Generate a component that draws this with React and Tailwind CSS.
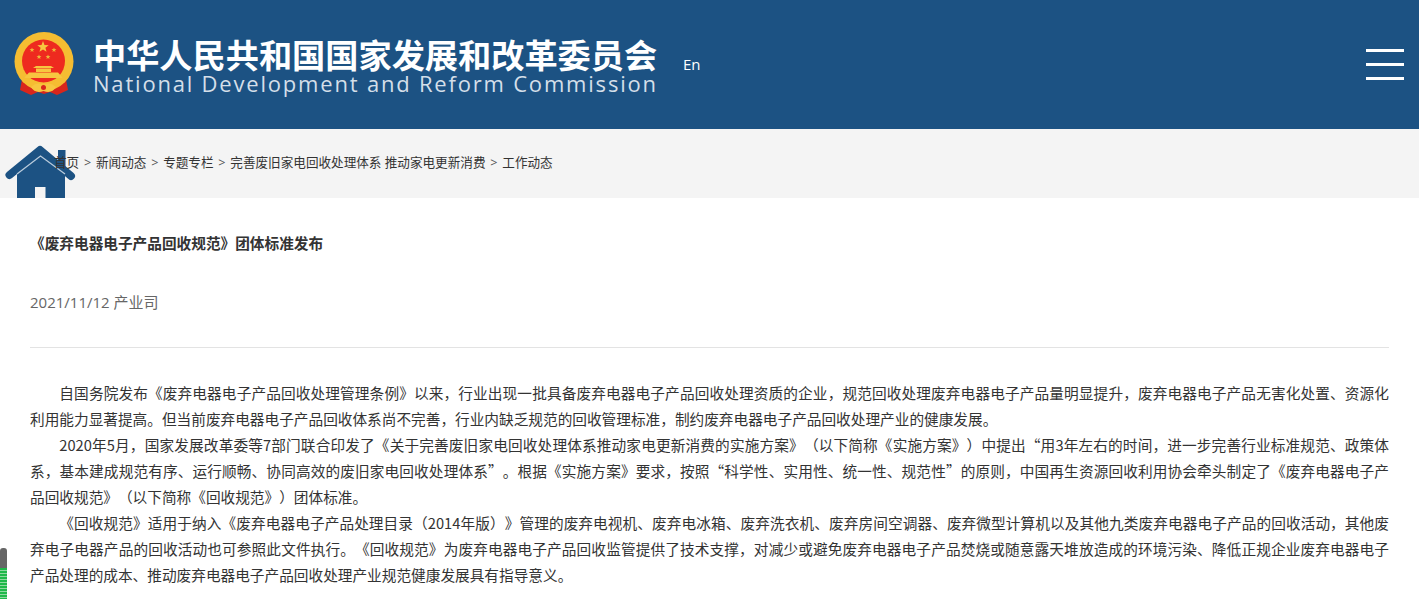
const cjk = { fontFamily: '"Open Sans", "Noto Sans CJK SC", "Noto Sans", sans-serif' };
const body = { fontFamily: '"Noto Sans CJK SC", "Open Sans", "Noto Sans", sans-serif' };

const crumbs = ["首页", "新闻动态", "专题专栏", "完善废旧家电回收处理体系 推动家电更新消费", "工作动态"];

function Star({ x, y, r, fill }) {
  const pts = [];
  for (let i = 0; i < 10; i++) {
    const rad = i % 2 === 0 ? r : r * 0.42;
    const a = (Math.PI / 5) * i - Math.PI / 2;
    pts.push(`${x + rad * Math.cos(a)},${y + rad * Math.sin(a)}`);
  }
  return <polygon points={pts.join(" ")} fill={fill} />;
}

function Emblem() {
  return (
    <svg width="60" height="64" viewBox="0 0 60 64" className="shrink-0">
      <path d="M9 42 L6 58 L17 63 L24 60 L30 62 L36 60 L43 63 L54 58 L51 42 Z" fill="#d9261c" />
      <circle cx="30" cy="29.500" r="29.500" fill="#f5bd32" />
      <circle cx="29.500" cy="29" r="21.500" fill="#ee2a1f" />
      <Star x={29} y={15} r={6} fill="#f7c640" />
      <Star x={18} y={18} r={2.600} fill="#efb63a" />
      <Star x={40} y={18} r={2.600} fill="#efb63a" />
      <Star x={25} y={25} r={2.600} fill="#efb63a" />
      <Star x={34} y={25} r={2.600} fill="#efb63a" />
      <path d="M19 36 H40 L37 34 H22 Z M22 36.500 H37 V40 H22 Z M15 40.500 H44 L49 46 H10 Z" fill="#f7c640" />
      <path d="M8 44 Q30 58 51 44 L51 49 Q30 62 8 49 Z" fill="#f5bd32" />
      <path d="M17 55 Q23 49 29.500 53 Q36 49 42 55 Q38 62 29.500 59 Q21 62 17 55 Z" fill="#f7c640" />
      <circle cx="29.500" cy="55.500" r="2.500" fill="#d9261c" />
    </svg>
  );
}

function HomeIcon() {
  return (
    <svg width="72" height="53" viewBox="0 0 72 53" className="absolute top-[16px] left-[5px]">
      <rect x="53" y="5" width="7.500" height="22" fill="#1c5283" />
      <path d="M12 26 L35 8 L60 26 V53 H40.500 V42 H30 V53 H12 Z" fill="#1c5283" />
      <path d="M4.500 30 L35 5 L66 31" fill="none" stroke="#1c5283" strokeWidth="8" strokeLinecap="round" strokeLinejoin="round" />
      <path d="M12 29 L35.500 11 L60 29" fill="none" stroke="#b9cbdb" strokeWidth="1.300" />
    </svg>
  );
}

export default function App() {
  return (
    <div className="relative h-[599px] w-full overflow-hidden bg-white text-[#333] [text-spacing-trim:space-all]" style={cjk}>
      <header className="flex h-[129px] items-center bg-[#1c5283] text-white">
        <div className="mt-[-1px] ml-[14px]">
          <Emblem />
        </div>
        <div className="mt-[5px] ml-[19px] flex w-[566px] flex-col">
          <div className="text-[33.2px] leading-[32px] font-bold whitespace-nowrap">中华人民共和国国家发展和改革委员会</div>
          <div className="text-[22px] leading-[22px] tracking-[1.8px] whitespace-nowrap text-[#d4dfe9]">
            National Development and Reform Commission
          </div>
        </div>
        <span className="ml-[24px] text-[15px]">En</span>
        <div className="mr-[15px] ml-auto flex w-[38px] flex-col gap-[11px]">
          <div className="h-[3px] bg-white" />
          <div className="h-[3px] bg-white" />
          <div className="h-[3px] bg-white" />
        </div>
      </header>

      <nav className="relative flex h-[69px] items-center overflow-hidden bg-[#f4f4f4] pl-[54px] text-[12.6px] text-[#333]">
        <HomeIcon />
        {crumbs.map((c, i) => (
          <span key={c} className="relative whitespace-nowrap">
            {i > 0 && <span className="mx-[4.8px] text-[#555]">&gt;</span>}
            {c}
          </span>
        ))}
      </nav>

      <main className="px-[30px] text-[14.667px]">
        <h1 className="pt-[31px] leading-[28px] font-bold text-[#333]" style={body}>《废弃电器电子产品回收规范》团体标准发布</h1>
        <div className="mt-[31px] border-b border-[#e3e3e3] pb-[31px] text-[15px] leading-[28px] text-[#666]">2021/11/12 产业司</div>
        <div className="mt-[32px] text-justify leading-[26px] text-[#333]" style={body}>
          <p className="indent-[2em]">自国务院发布《废弃电器电子产品回收处理管理条例》以来，行业出现一批具备废弃电器电子产品回收处理资质的企业，规范回收处理废弃电器电子产品量明显提升，废弃电器电子产品无害化处置、资源化利用能力显著提高。但当前废弃电器电子产品回收体系尚不完善，行业内缺乏规范的回收管理标准，制约废弃电器电子产品回收处理产业的健康发展。</p>
          <p className="indent-[2em]">2020年5月，国家发展改革委等7部门联合印发了《关于完善废旧家电回收处理体系推动家电更新消费的实施方案》（以下简称《实施方案》）中提出“用3年左右的时间，进一步完善行业标准规范、政策体系，基本建成规范有序、运行顺畅、协同高效的废旧家电回收处理体系”。根据《实施方案》要求，按照“科学性、实用性、统一性、规范性”的原则，中国再生资源回收利用协会牵头制定了《废弃电器电子产品回收规范》（以下简称《回收规范》）团体标准。</p>
          <p className="indent-[2em]">《回收规范》适用于纳入《废弃电器电子产品处理目录（2014年版）》管理的废弃电视机、废弃电冰箱、废弃洗衣机、废弃房间空调器、废弃微型计算机以及其他九类废弃电器电子产品的回收活动，其他废弃电子电器产品的回收活动也可参照此文件执行。《回收规范》为废弃电器电子产品回收监管提供了技术支撑，对减少或避免废弃电器电子产品焚烧或随意露天堆放造成的环境污染、降低正规企业废弃电器电子产品处理的成本、推动废弃电器电子产品回收处理产业规范健康发展具有指导意义。</p>
        </div>
      </main>

      <div className="absolute bottom-0 left-0 h-[51px] w-[7px] rounded-t-[3px] bg-[#666] pt-[20px]">
        <div className="h-full w-full bg-[repeating-linear-gradient(to_bottom,#1fb84a_0,#1fb84a_2px,#8fd9a0_2px,#8fd9a0_3px)]" />
      </div>
    </div>
  );
}
